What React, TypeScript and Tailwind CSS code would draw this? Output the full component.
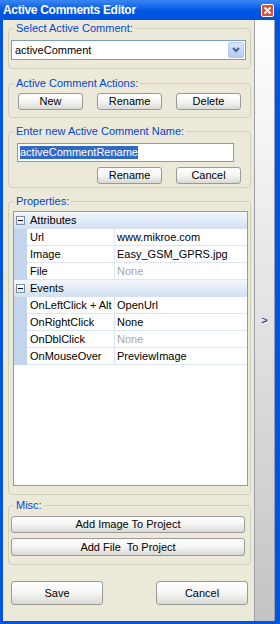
import type { ReactNode } from 'react';

const rows: { name: string; value: string; muted?: boolean }[][] = [
  [
    { name: 'Url', value: 'www.mikroe.com' },
    { name: 'Image', value: 'Easy_GSM_GPRS.jpg' },
    { name: 'File', value: 'None', muted: true },
  ],
  [
    { name: 'OnLeftClick + Alt', value: 'OpenUrl' },
    { name: 'OnRightClick', value: 'None' },
    { name: 'OnDblClick', value: 'None', muted: true },
    { name: 'OnMouseOver', value: 'PreviewImage' },
  ],
];
const categories = ['Attributes', 'Events'];

function GroupBox({ title, className = '', children }: { title: string; className?: string; children: ReactNode }) {
  return (
    <fieldset className={`ml-[5px] w-[243px] rounded-[4px] border border-[#d0d0bf] ${className}`}>
      <legend className="ml-[5px] px-[2px] text-[11px] leading-[12px] text-[#0046d5]">{title}</legend>
      {children}
    </fieldset>
  );
}

function XpButton({ children, className = '' }: { children: ReactNode; className?: string }) {
  return (
    <button className={`flex items-center justify-center whitespace-pre rounded-[3px] border border-[#9a9a98] bg-gradient-to-b from-white via-[#f5f5f3] to-[#d9d9d5] text-[11px] leading-none text-black ${className}`}>
      {children}
    </button>
  );
}

function MinusBox() {
  return (
    <div className="flex h-[9px] w-[9px] items-center justify-center border border-[#7b8ea8] bg-gradient-to-b from-white to-[#dde6f2]">
      <div className="h-px w-[5px] bg-black" />
    </div>
  );
}

export default function App() {
  return (
    <div className="flex h-[624px] w-[280px] flex-col bg-[#0054e3] font-['Liberation_Sans',Arial,sans-serif] text-[11px]">
      {/* title bar */}
      <div className="flex h-[20px] items-center justify-between bg-gradient-to-b from-[#3a86f2] via-[#0058e6] to-[#0052dc] pl-[3px] pr-[6px]">
        <span className="text-[12px] font-bold tracking-[-0.3px] text-white">Active Comments Editor</span>
        <div className="flex h-[13px] w-[13px] items-center justify-center rounded-[2px] border border-white bg-[#e0502d]">
          <svg width="9" height="9" viewBox="0 0 9 9">
            <path d="M1.5 1.5 L7.5 7.5 M7.5 1.5 L1.5 7.5" stroke="white" strokeWidth="1.8" />
          </svg>
        </div>
      </div>

      <div className="flex flex-1 pb-[3px] pl-[3px]">
        <div className="w-[251px] bg-[#ece9d8] pt-[2px]">
          <GroupBox title="Select Active Comment:">
            <div className="mb-[8px] ml-[2px] mt-[6px] flex h-[20px] w-[235px] items-center justify-between border border-[#7f9db9] bg-white pl-[3px] pr-px">
              <span>activeComment</span>
              <div className="flex h-[16px] w-[16px] items-center justify-center rounded-[2px] border border-[#b6c8f4] bg-gradient-to-b from-[#dbe5fd] to-[#b4c8f6]">
                <svg width="10" height="8" viewBox="0 0 10 8">
                  <path d="M2 2 L5 5 L8 2" stroke="#4d6185" strokeWidth="2" fill="none" />
                </svg>
              </div>
            </div>
          </GroupBox>

          <GroupBox title="Active Comment Actions:" className="mt-[8px]">
            <div className="mb-[7px] ml-[9px] mt-[4px] flex gap-[14px]">
              <XpButton className="h-[17px] w-[65px]">New</XpButton>
              <XpButton className="h-[17px] w-[65px]">Rename</XpButton>
              <XpButton className="h-[17px] w-[65px]">Delete</XpButton>
            </div>
          </GroupBox>

          <GroupBox title="Enter new Active Comment Name:" className="mt-[7px]">
            <div className="ml-[8px] mt-[6px] flex h-[19px] w-[217px] items-center border border-[#7f9db9] bg-white pl-[2px]">
              <span className="bg-[#316ac5] leading-[13px] text-white">activeCommentRename</span>
            </div>
            <div className="mb-[3px] ml-[88px] mt-[5px] flex gap-[14px]">
              <XpButton className="h-[17px] w-[65px]">Rename</XpButton>
              <XpButton className="h-[17px] w-[65px]">Cancel</XpButton>
            </div>
          </GroupBox>

          <GroupBox title="Properties:" className="mt-[7px]">
            <div className="mb-[8px] ml-[4px] mt-[4px] flex h-[275px] w-[235px] flex-col border border-[#8d9bb0] bg-white">
              {categories.map((cat, ci) => (
                <div key={cat}>
                  <div className="flex h-[17px] items-center border-b border-[#d5e1f1] bg-gradient-to-b from-[#f3f7fc] to-[#d3e1f3]">
                    <div className="flex w-[13px] justify-center">
                      <MinusBox />
                    </div>
                    <span className="pl-[3px]">{cat}</span>
                  </div>
                  {rows[ci].map((r) => (
                    <div key={r.name} className="flex h-[17px]">
                      <div className="w-[13px] bg-[#c3d5ed]" />
                      <div className="flex w-[88px] items-center border-b border-r border-[#dde7f4] pl-[3px]">{r.name}</div>
                      <div className={`flex flex-1 items-center border-b border-[#dde7f4] pl-[2px] ${r.muted ? 'text-[#a7a6a0]' : ''}`}>
                        {r.value}
                      </div>
                    </div>
                  ))}
                </div>
              ))}
              <div className="flex-1" />
            </div>
          </GroupBox>

          <GroupBox title="Misc:" className="mt-[4px]">
            <XpButton className="ml-[2px] mt-[5px] h-[17px] w-[234px]">Add Image To Project</XpButton>
            <XpButton className="mb-[8px] ml-[2px] mt-[5px] h-[18px] w-[234px]">Add File  To Project</XpButton>
          </GroupBox>

          <div className="ml-[8px] mt-[16px] flex gap-[53px]">
            <XpButton className="h-[24px] w-[92px]">Save</XpButton>
            <XpButton className="h-[24px] w-[92px]">Cancel</XpButton>
          </div>
        </div>

        {/* collapsed side panel */}
        <div className="flex w-[21px] items-center justify-center border-x border-[#9aa0a8] bg-gradient-to-b from-white via-[#e2e2e2] to-[#c4c4c4]">
          <span className="text-[11px] text-[#14206a]">&gt;</span>
        </div>
      </div>
    </div>
  );
}
